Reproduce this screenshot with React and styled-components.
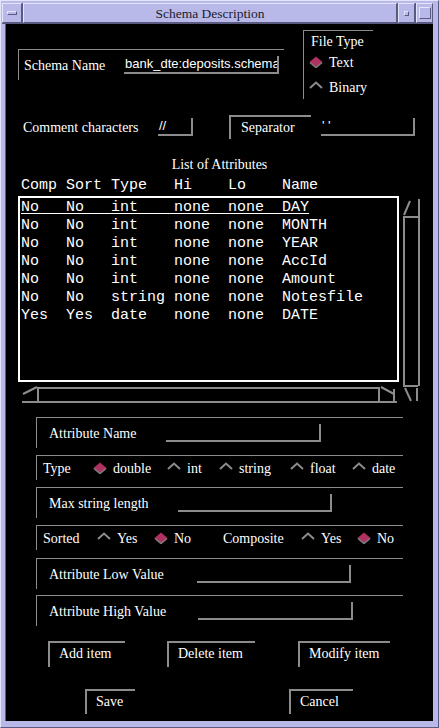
import React from "react";
import styled, { createGlobalStyle } from "styled-components";

const GRAY = "#8c8c8c";
const LAV = "#b9b9e9";
const LAV_LIGHT = "#e4e4fd";
const LAV_DARK = "#5a5a80";
const MAG = "#b0305f";

const Global = createGlobalStyle`
  html, body { margin: 0; padding: 0; background: #ffffff; }
  #root { width: 439px; height: 728px; }
`;

const Window = styled.div`
  width: 439px;
  height: 728px;
  box-sizing: border-box;
  background: ${LAV};
  border-top: 1px solid ${LAV_LIGHT};
  border-left: 1px solid ${LAV_LIGHT};
  border-right: 1px solid ${LAV_DARK};
  border-bottom: 1px solid ${LAV_DARK};
  display: flex;
  flex-direction: column;
  font-family: "Liberation Serif", "Times New Roman", serif;
`;

const TitleBar = styled.div`
  margin: 2px 5px 0 1px;
  height: 21px;
  display: flex;
  gap: 1px;
  background: ${LAV_DARK};
`;

const Bevel = styled.div`
  box-sizing: border-box;
  background: ${LAV};
  border-top: 1px solid ${LAV_LIGHT};
  border-left: 1px solid ${LAV_LIGHT};
  border-right: 1px solid ${LAV_DARK};
  border-bottom: 1px solid ${LAV_DARK};
  display: flex;
  align-items: center;
  justify-content: center;
`;

const MenuButton = styled(Bevel)`
  width: 20px;
  height: 20px;
`;

const TitleText = styled(Bevel)`
  flex: 1;
  height: 20px;
  padding-top: 1px;
  font-size: 13.5px;
  color: #1c1c2c;
`;

const SmallButton = styled(Bevel)`
  width: 17px;
  height: 20px;
`;

const MenuBar = styled(Bevel)`
  width: 10px;
  height: 4px;
`;

const MinDot = styled(Bevel)`
  width: 5px;
  height: 5px;
`;

const MaxBox = styled(Bevel)`
  width: 12px;
  height: 12px;
`;

const Content = styled.div`
  margin: 0 5px 0 5px;
  height: 697px;
  background: #000000;
  box-shadow: -1px 0 0 ${LAV_DARK};
  display: flex;
  flex-direction: column;
  color: #ffffff;
  font-size: 14px;
`;

const TopRow = styled.div`
  height: 76px;
  display: flex;
  align-items: flex-start;
`;

const SchemaFrame = styled.div`
  margin-left: 12px;
  margin-top: 25px;
  width: 266px;
  height: 31px;
  box-sizing: border-box;
  border-top: 1px solid ${GRAY};
  border-left: 1px solid ${GRAY};
  padding-left: 5px;
  display: flex;
  align-items: center;
`;

const Label = styled.span`
  display: inline-block;
  margin-left: ${(p) => p.$ml || 0}px;
  width: ${(p) => (p.$w ? `${p.$w}px` : "auto")};
  flex: none;
  white-space: nowrap;
  font-size: 14px;
  line-height: 18px;
  padding-top: 1px;
`;

const Field = styled.div`
  width: ${(p) => p.$w}px;
  height: 18px;
  box-sizing: border-box;
  border-bottom: 2px solid ${GRAY};
  border-right: 2px solid ${GRAY};
  padding-left: 1px;
  font-family: "Liberation Sans", Arial, sans-serif;
  font-size: 13px;
  line-height: 16px;
  white-space: pre;
  overflow: hidden;
  flex: none;
  margin-left: ${(p) => p.$ml || 0}px;
`;

const FileFrame = styled.div`
  margin-left: 19px;
  margin-top: 6px;
  width: 70px;
  height: 69px;
  box-sizing: border-box;
  border-top: 1px solid ${GRAY};
  border-left: 1px solid ${GRAY};
  padding-left: 5px;
  display: flex;
  flex-direction: column;
`;

const FrameTitle = styled.div`
  height: 20px;
  line-height: 20px;
  padding-top: 1px;
  box-sizing: border-box;
  padding-left: 2px;
  white-space: nowrap;
`;

const RadioRow = styled.div`
  height: 20px;
  margin-top: ${(p) => p.$mt}px;
  display: flex;
  align-items: center;
`;

const RadioItem = styled.div`
  width: ${(p) => (p.$w ? `${p.$w}px` : "auto")};
  flex: none;
  display: flex;
  align-items: center;
  white-space: nowrap;
`;

const RadioLabel = styled.span`
  margin-left: 6px;
  line-height: 18px;
  padding-top: 1px;
`;

const Indicator = styled.svg`
  width: 14px;
  height: 12px;
  flex: none;
  display: block;
`;

const CommentRow = styled.div`
  margin-top: 15px;
  height: 24px;
  display: flex;
  align-items: center;
`;

const SepButton = styled.div`
  margin-left: 36px;
  width: 82px;
  height: 24px;
  box-sizing: border-box;
  border-top: 2px solid ${GRAY};
  border-left: 2px solid ${GRAY};
  padding-left: 10px;
  display: flex;
  align-items: center;
  flex: none;
`;

const ListTitle = styled.div`
  margin-top: 16px;
  height: 18px;
  line-height: 18px;
  padding-top: 1px;
  text-align: center;
`;

const Mono = styled.div`
  font-family: "Liberation Mono", "Courier New", monospace;
  font-size: 15px;
  height: 18px;
  line-height: 18px;
  white-space: pre;
  color: #ffffff;
`;

const Header = styled(Mono)`
  margin-top: 3px;
  padding-left: 15px;
`;

const ListWrap = styled.div`
  margin-top: 1px;
  display: flex;
  align-items: flex-start;
`;

const ListColumn = styled.div`
  margin-left: 12px;
  display: flex;
  flex-direction: column;
`;

const ListBox = styled.div`
  width: 381px;
  height: 186px;
  box-sizing: border-box;
  border: 2px solid #ffffff;
  padding: 1px 0 0 1px;
  overflow: hidden;
`;

const ListRow = styled(Mono)`
  text-decoration: ${(p) => (p.$sel ? "underline" : "none")};
  text-underline-offset: 2px;
`;

const HBar = styled.svg`
  margin-top: 3px;
  margin-left: 4px;
  width: 378px;
  height: 18px;
  display: block;
`;

const VBar = styled.svg`
  margin-left: 3px;
  margin-top: 2px;
  width: 18px;
  height: 205px;
  display: block;
  flex: none;
`;

const Group = styled.div`
  margin-left: 30px;
  margin-top: ${(p) => p.$mt}px;
  width: 367px;
  height: ${(p) => p.$h}px;
  box-sizing: border-box;
  border-top: 1px solid ${GRAY};
  border-left: 1px solid ${GRAY};
  padding-left: ${(p) => p.$pl}px;
  display: flex;
  align-items: center;
`;

const ButtonRow = styled.div`
  margin-top: ${(p) => p.$mt}px;
  height: ${(p) => p.$h}px;
  display: flex;
`;

const PushButton = styled.div`
  margin-left: ${(p) => p.$ml}px;
  width: ${(p) => p.$w}px;
  height: ${(p) => p.$h}px;
  box-sizing: border-box;
  border-top: 2px solid ${GRAY};
  border-left: 2px solid ${GRAY};
  padding-left: 9px;
  padding-bottom: 2px;
  display: flex;
  align-items: center;
  white-space: nowrap;
  flex: none;
`;

const Radio = ({ on }) => (
  <Indicator viewBox="0 0 14 12">
    {on ? (
      <>
        <polygon points="7,0.5 13.5,6 7,11.5 0.5,6" fill={MAG} />
        <polyline
          points="1,6.5 7,11.5 13,6.5"
          fill="none"
          stroke="#7c7c7c"
          strokeWidth="1.6"
        />
      </>
    ) : (
      <polyline
        points="1,7 7,1.5 13,7"
        fill="none"
        stroke={GRAY}
        strokeWidth="2"
      />
    )}
  </Indicator>
);

const RadioOpt = ({ on, label, w }) => (
  <RadioItem $w={w}>
    <Radio on={on} />
    <RadioLabel>{label}</RadioLabel>
  </RadioItem>
);

const rows = [
  ["No", "No", "int", "none", "none", "DAY"],
  ["No", "No", "int", "none", "none", "MONTH"],
  ["No", "No", "int", "none", "none", "YEAR"],
  ["No", "No", "int", "none", "none", "AccId"],
  ["No", "No", "int", "none", "none", "Amount"],
  ["No", "No", "string", "none", "none", "Notesfile"],
  ["Yes", "Yes", "date", "none", "none", "DATE"],
];

const fmt = (r) =>
  r[0].padEnd(5) +
  r[1].padEnd(5) +
  r[2].padEnd(7) +
  r[3].padEnd(6) +
  r[4].padEnd(6) +
  r[5];

export default function App() {
  return (
    <>
      <Global />
      <Window>
        <TitleBar>
          <MenuButton>
            <MenuBar />
          </MenuButton>
          <TitleText>Schema Description</TitleText>
          <SmallButton>
            <MinDot />
          </SmallButton>
          <SmallButton>
            <MaxBox />
          </SmallButton>
        </TitleBar>
        <Content>
          <TopRow>
            <SchemaFrame>
              <Label $w={100}>Schema Name</Label>
              <Field $w={155}>bank_dte:deposits.schema</Field>
            </SchemaFrame>
            <FileFrame>
              <FrameTitle>File Type</FrameTitle>
              <RadioRow $mt={1}>
                <RadioOpt on label="Text" />
              </RadioRow>
              <RadioRow $mt={5}>
                <RadioOpt label="Binary" />
              </RadioRow>
            </FileFrame>
          </TopRow>

          <CommentRow>
            <Label $ml={17} $w={135}>
              Comment characters
            </Label>
            <Field $w={35}>//</Field>
            <SepButton>Separator</SepButton>
            <Field $w={94} $ml={10}>
              {"' '"}
            </Field>
          </CommentRow>

          <ListTitle>List of Attributes</ListTitle>
          <Header>Comp Sort Type   Hi    Lo    Name</Header>

          <ListWrap>
            <ListColumn>
              <ListBox>
                {rows.map((r, i) => (
                  <ListRow key={i} $sel={i === 0}>
                    {fmt(r)}
                  </ListRow>
                ))}
              </ListBox>
              <HBar viewBox="0 0 378 18">
                <g stroke={GRAY} strokeWidth="2" fill="none">
                  <line x1="1" y1="9" x2="15" y2="2" />
                  <line x1="16" y1="2" x2="16" y2="17" />
                  <line x1="16" y1="3" x2="357" y2="3" />
                  <line x1="357" y1="2" x2="357" y2="17" />
                  <line x1="359" y1="2" x2="372" y2="9" />
                  <line x1="372" y1="4" x2="372" y2="17" />
                  <line x1="0" y1="17" x2="375" y2="17" />
                </g>
              </HBar>
            </ListColumn>
            <VBar viewBox="0 0 18 205">
              <g stroke={GRAY} strokeWidth="2" fill="none">
                <line x1="1" y1="17" x2="7" y2="3" />
                <line x1="16" y1="1" x2="16" y2="188" />
                <line x1="0" y1="19" x2="16" y2="19" />
                <line x1="1" y1="19" x2="1" y2="187" />
                <line x1="0" y1="188" x2="15" y2="188" />
                <line x1="2" y1="190" x2="8" y2="203" />
                <line x1="14" y1="190" x2="14" y2="203" />
              </g>
            </VBar>
          </ListWrap>

          <Group $mt={14} $h={31} $pl={12}>
            <Label $w={117}>Attribute Name</Label>
            <Field $w={155} />
          </Group>

          <Group $mt={7} $h={25} $pl={6}>
            <Label $w={50}>Type</Label>
            <RadioOpt on label="double" w={74} />
            <RadioOpt label="int" w={52} />
            <RadioOpt label="string" w={71} />
            <RadioOpt label="float" w={62} />
            <RadioOpt label="date" />
          </Group>

          <Group $mt={7} $h={31} $pl={12}>
            <Label $w={129}>Max string length</Label>
            <Field $w={154} />
          </Group>

          <Group $mt={7} $h={25} $pl={6}>
            <Label $w={54}>Sorted</Label>
            <RadioOpt label="Yes" w={57} />
            <RadioOpt on label="No" w={69} />
            <Label $w={78}>Composite</Label>
            <RadioOpt label="Yes" w={56} />
            <RadioOpt on label="No" />
          </Group>

          <Group $mt={8} $h={31} $pl={12}>
            <Label $w={148}>Attribute Low Value</Label>
            <Field $w={154} />
          </Group>

          <Group $mt={6} $h={31} $pl={12}>
            <Label $w={149}>Attribute High Value</Label>
            <Field $w={155} />
          </Group>

          <ButtonRow $mt={15} $h={26}>
            <PushButton $ml={42} $w={77} $h={26}>
              Add item
            </PushButton>
            <PushButton $ml={42} $w={88} $h={26}>
              Delete item
            </PushButton>
            <PushButton $ml={43} $w={92} $h={26}>
              Modify item
            </PushButton>
          </ButtonRow>

          <ButtonRow $mt={22} $h={25}>
            <PushButton $ml={79} $w={50} $h={25}>
              Save
            </PushButton>
            <PushButton $ml={154} $w={64} $h={25}>
              Cancel
            </PushButton>
          </ButtonRow>
        </Content>
      </Window>
    </>
  );
}
